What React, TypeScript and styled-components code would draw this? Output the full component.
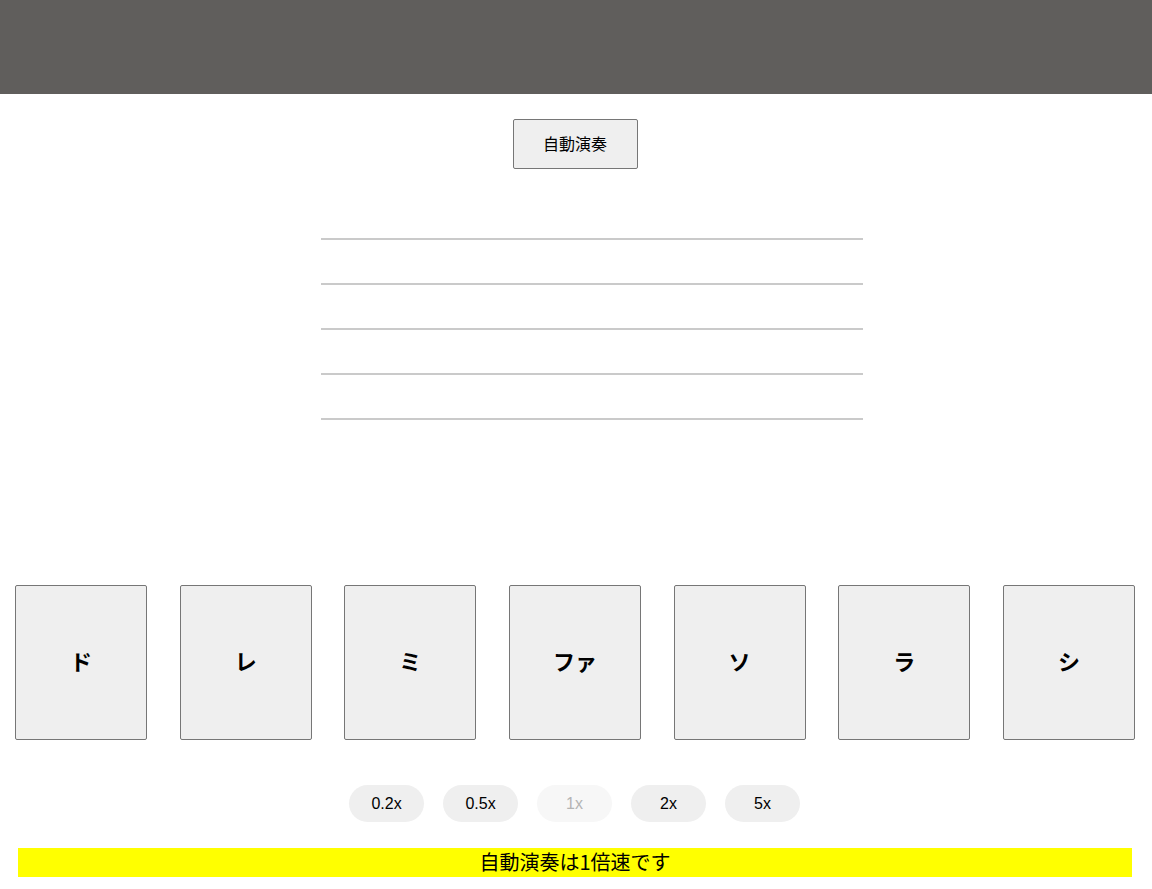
import React, { useState } from 'react';
import styled, { createGlobalStyle } from 'styled-components';

const GlobalStyle = createGlobalStyle`
  body {
    margin: 0;
    background: #fff;
    font-family: "Liberation Sans", "Noto Sans CJK JP", sans-serif;
  }
`;

const Page = styled.main`
  display: flex;
  flex-direction: column;
  align-items: center;
  width: 100%;
`;

const Header = styled.header`
  width: 100%;
  height: 94px;
  background: #605e5c;
`;

const AutoButton = styled.button`
  margin-top: 25px;
  margin-right: 2px;
  width: 125px;
  height: 50px;
  background: #efefef;
  border: 1px solid #767676;
  border-radius: 2px;
  font-family: "Noto Sans CJK JP", sans-serif;
  font-size: 16px;
  color: #000;
  padding-bottom: 3px;
  cursor: pointer;
`;

const Staff = styled.div`
  margin-top: 69px;
  margin-left: 32px;
  width: 542px;
  display: flex;
  flex-direction: column;
  gap: 43px;
`;

const StaffLine = styled.div`
  height: 2px;
  background: #cacaca;
`;

const Keyboard = styled.div`
  margin-top: 165px;
  box-sizing: border-box;
  width: 100%;
  padding: 0 17px 0 15px;
  display: flex;
  justify-content: space-between;
`;

const Key = styled.button`
  width: 132px;
  height: 155px;
  background: #efefef;
  border: 1px solid #767676;
  border-radius: 2px;
  font-family: "Noto Sans CJK JP", sans-serif;
  font-size: 22px;
  font-weight: 700;
  color: #000;
  padding-bottom: 6px;
  cursor: pointer;
`;

const SpeedRow = styled.div`
  margin-top: 45px;
  margin-right: 3px;
  display: flex;
  gap: 19px;
`;

const SpeedButton = styled.button<{ $active: boolean }>`
  width: 75px;
  height: 37px;
  border: none;
  border-radius: 19px;
  background: ${(p) => (p.$active ? '#f7f7f7' : '#efefef')};
  color: ${(p) => (p.$active ? '#b4b4b4' : '#000')};
  font-family: "Liberation Sans", sans-serif;
  font-size: 16px;
  cursor: ${(p) => (p.$active ? 'default' : 'pointer')};
`;

const Status = styled.div`
  margin-top: 26px;
  align-self: stretch;
  margin-left: 18px;
  margin-right: 20px;
  height: 29px;
  line-height: 27px;
  background: #ffff00;
  text-align: center;
  font-family: "Noto Sans CJK JP", sans-serif;
  font-size: 20px;
  color: #000;
`;

const notes = ['ド', 'レ', 'ミ', 'ファ', 'ソ', 'ラ', 'シ'];
const speeds = [0.2, 0.5, 1, 2, 5];

export default function App() {
  const [speed, setSpeed] = useState(1);

  return (
    <>
      <GlobalStyle />
      <Page>
        <Header />
        <AutoButton>自動演奏</AutoButton>
        <Staff>
          {[0, 1, 2, 3, 4].map((i) => (
            <StaffLine key={i} />
          ))}
        </Staff>
        <Keyboard>
          {notes.map((n) => (
            <Key key={n}>{n}</Key>
          ))}
        </Keyboard>
        <SpeedRow>
          {speeds.map((v) => (
            <SpeedButton key={v} $active={v === speed} disabled={v === speed} onClick={() => setSpeed(v)}>
              {v}x
            </SpeedButton>
          ))}
        </SpeedRow>
        <Status>自動演奏は{speed}倍速です</Status>
      </Page>
    </>
  );
}
